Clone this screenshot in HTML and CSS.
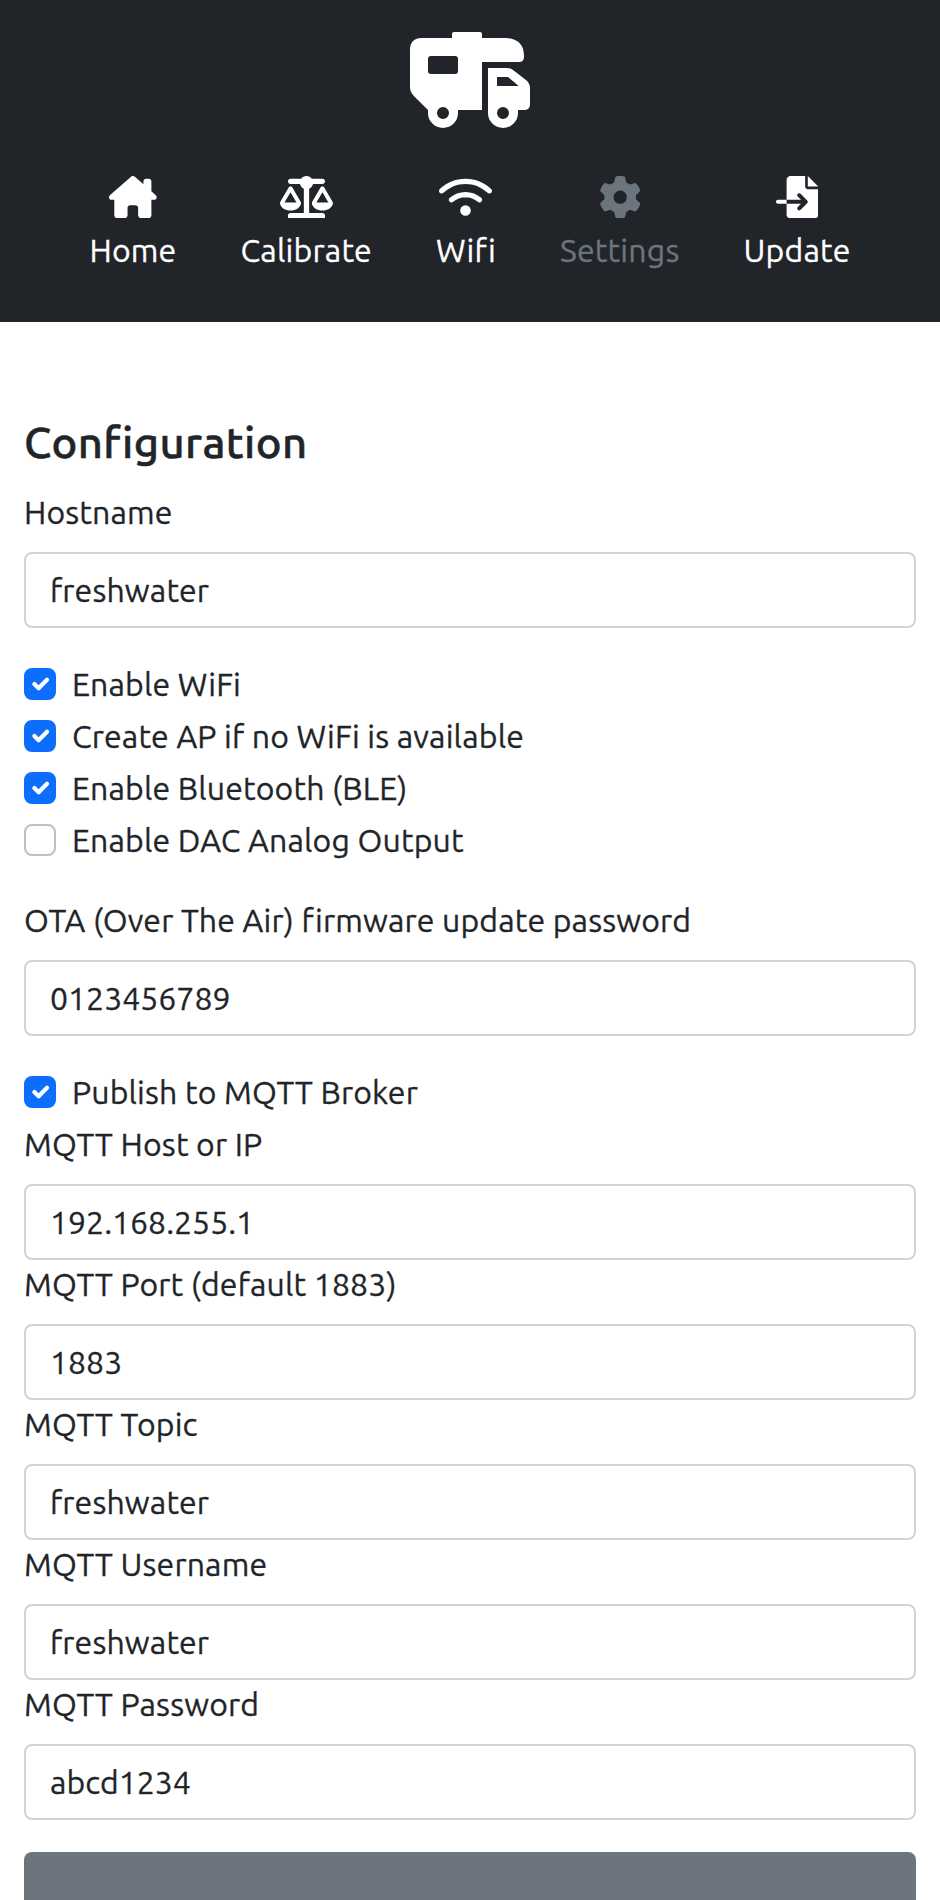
FILE: index.html
```html
<!DOCTYPE html>
<html lang="en">
<head>
<meta charset="utf-8">
<title>Settings</title>
<link rel="stylesheet" href="styles.css">
</head>
<body>
<header class="header">
  <svg class="logo" viewBox="60 36 360 288" fill="currentColor" fill-rule="evenodd"><path d="M96 54H186V42Q186 36 192 36H270Q276 36 276 42V54H348Q402 56 402 108V111Q402 126 387 126H276V270H204V279A45 45 0 0 1 114 279V270L71 227Q60 216 60 202V90Q60 54 96 54ZM123 108Q114 108 114 117V153Q114 162 123 162H195Q204 162 204 153V117Q204 108 195 108ZM159 261A18 18 0 1 0 159 297A18 18 0 1 0 159 261Z"/><path d="M294 144H350Q362 144 372 152L408 180Q420 190 420 204V252Q420 270 402 270H384V279A45 45 0 0 1 294 279ZM321 171V198H386L354 171ZM339 261A18 18 0 1 0 339 297A18 18 0 1 0 339 261Z"/></svg>
  <nav class="nav">
    <a class="item"><svg viewBox="0 0 576 512"><path d="M575.8 255.5c0 18-15 32.1-32 32.1h-32l.7 160.2V472c0 22.1-17.9 40-40 40H392c-22.1 0-40-17.9-40-40V384c0-17.7-14.3-32-32-32H256c-17.7 0-32 14.3-32 32v88c0 22.1-17.9 40-40 40H104c-22.1 0-40-17.9-40-40V287.6H32c-18 0-32-14-32-32.1c0-9 3-17 10-24L266.4 8c7-7 15-8 22-8s15 2 21 7L416 100.7V64c0-17.7 14.3-32 32-32h32c17.7 0 32 14.3 32 32v121l52.8 46.5c8 7 12 15 11 24z"/></svg><span>Home</span></a>
    <a class="item"><svg viewBox="0 0 640 512"><path d="M384 32H512c17.7 0 32 14.3 32 32s-14.3 32-32 32H398.4c-5.2 25.8-22.9 47.1-46.4 57.3V448H512c17.7 0 32 14.3 32 32v32H96v-32c0-17.7 14.3-32 32-32H288V153.3c-23.5-10.3-41.2-31.6-46.4-57.3H128c-17.7 0-32-14.3-32-32s14.3-32 32-32H256c14.6-19.4 37.8-32 64-32s49.4 12.6 64 32zm55.6 288H584.4L512 195.8 439.6 320zM512 416c-62.9 0-115.2-34-126-78.9c-2.6-11 1-22.3 6.7-32.1l95.2-163.2c5-8.6 14.2-13.8 24.1-13.8s19.1 5.3 24.1 13.8l95.2 163.2c5.7 9.8 9.3 21.1 6.7 32.1C627.2 382 574.9 416 512 416zM126.8 195.8L54.4 320H199.3L126.8 195.8zM.9 337.1c-2.6-11 1-22.3 6.7-32.1l95.2-163.2c5-8.6 14.2-13.8 24.1-13.8s19.1 5.3 24.1 13.8l95.2 163.2c5.7 9.8 9.3 21.1 6.7 32.1C242 382 189.7 416 126.8 416S11.7 382 .9 337.1z"/></svg><span>Calibrate</span></a>
    <a class="item"><svg viewBox="0 0 640 512"><path d="M54.2 202.9C123.2 136.7 216.8 96 320 96s196.8 40.7 265.8 106.9c12.8 12.2 33 11.8 45.2-.9s11.8-33-.9-45.2C549.7 79.5 440.4 32 320 32S90.3 79.5 9.8 156.7C-2.9 169-3.3 189.2 8.9 202s32.5 13.2 45.2 .9zM320 256c56.8 0 108.6 21.1 148.2 56c13.3 11.7 33.5 10.4 45.2-2.8s10.4-33.5-2.8-45.2C459.8 219.2 393 192 320 192s-139.8 27.2-190.5 72c-13.3 11.7-14.5 31.9-2.8 45.2s31.9 14.5 45.2 2.8c39.5-34.9 91.3-56 148.2-56zm64 160a64 64 0 1 0 -128 0 64 64 0 1 0 128 0z"/></svg><span>Wifi</span></a>
    <a class="item active"><svg viewBox="0 0 512 512"><path d="M495.9 166.6c3.2 8.7 .5 18.4-6.4 24.6l-43.3 39.4c1.1 8.3 1.7 16.8 1.7 25.4s-.6 17.1-1.7 25.4l43.3 39.4c6.9 6.2 9.6 15.9 6.4 24.6c-4.4 11.9-9.7 23.3-15.8 34.3l-4.7 8.1c-6.6 11-14 21.4-22.1 31.2c-5.9 7.2-15.7 9.6-24.5 6.8l-55.7-17.7c-13.4 10.3-28.2 18.9-44 25.4l-12.5 57.1c-2 9.1-9 16.3-18.2 17.8c-13.8 2.3-28 3.5-42.5 3.5s-28.7-1.2-42.5-3.5c-9.2-1.5-16.2-8.7-18.2-17.8l-12.5-57.1c-15.8-6.5-30.6-15.1-44-25.4L83.1 425.9c-8.8 2.8-18.6 .3-24.5-6.8c-8.1-9.8-15.5-20.2-22.1-31.2l-4.7-8.1c-6.1-11-11.4-22.4-15.8-34.3c-3.2-8.7-.5-18.4 6.4-24.6l43.3-39.4C64.6 273.1 64 264.6 64 256s.6-17.1 1.7-25.4L22.4 191.2c-6.9-6.2-9.6-15.9-6.4-24.6c4.4-11.9 9.7-23.3 15.8-34.3l4.7-8.1c6.6-11 14-21.4 22.1-31.2c5.9-7.2 15.7-9.6 24.5-6.8l55.7 17.7c13.4-10.3 28.2-18.9 44-25.4l12.5-57.1c2-9.1 9-16.3 18.2-17.8C227.3 1.2 241.5 0 256 0s28.7 1.2 42.5 3.5c9.2 1.5 16.2 8.7 18.2 17.8l12.5 57.1c15.8 6.5 30.6 15.1 44 25.4l55.7-17.7c8.8-2.8 18.6-.3 24.5 6.8c8.1 9.8 15.5 20.2 22.1 31.2l4.7 8.1c6.1 11 11.4 22.4 15.8 34.3zM256 336a80 80 0 1 0 0-160 80 80 0 1 0 0 160z"/></svg><span>Settings</span></a>
    <a class="item"><svg viewBox="0 0 512 512"><path d="M384 0v128h128L384 0zM352 128L352 0H176C149.5 0 128 21.5 128 48V288h174.1l-39.03-39.03c-9.375-9.375-9.375-24.56 0-33.94s24.56-9.375 33.94 0l80 80c9.375 9.375 9.375 24.56 0 33.94l-80 80c-9.375 9.375-24.56 9.375-33.94 0C258.3 404.3 256 398.2 256 392s2.344-12.28 7.031-16.97L302.1 336H128v128C128 490.5 149.5 512 176 512h288c26.51 0 48-21.49 48-48V160h-127.1C366.3 160 352 145.7 352 128zM24 288C10.75 288 0 298.7 0 312c0 13.25 10.75 24 24 24H128V288H24z"/></svg><span>Update</span></a>
  </nav>
</header>
<main class="main">
  <h4 class="title">Configuration</h4>
  <label class="label">Hostname</label>
  <input class="input" value="freshwater">
  <div class="checks">
    <label class="check"><span class="box on"><svg viewBox="0 0 20 20"><path d="m6 10 3 3 6-6"/></svg></span><span>Enable WiFi</span></label>
    <label class="check"><span class="box on"><svg viewBox="0 0 20 20"><path d="m6 10 3 3 6-6"/></svg></span><span>Create AP if no WiFi is available</span></label>
    <label class="check"><span class="box on"><svg viewBox="0 0 20 20"><path d="m6 10 3 3 6-6"/></svg></span><span>Enable Bluetooth (BLE)</span></label>
    <label class="check"><span class="box"></span><span>Enable DAC Analog Output</span></label>
  </div>
  <label class="label">OTA (Over The Air) firmware update password</label>
  <input class="input numeric" value="0123456789">
  <div class="checks publish">
    <label class="check"><span class="box on"><svg viewBox="0 0 20 20"><path d="m6 10 3 3 6-6"/></svg></span><span>Publish to MQTT Broker</span></label>
  </div>
  <label class="label">MQTT Host or IP</label>
  <input class="input numeric" value="192.168.255.1">
  <label class="label">MQTT Port (default 1883)</label>
  <input class="input numeric" value="1883">
  <label class="label">MQTT Topic</label>
  <input class="input" value="freshwater">
  <label class="label">MQTT Username</label>
  <input class="input" value="freshwater">
  <label class="label">MQTT Password</label>
  <input class="input numeric" value="abcd1234">
  <button class="save" aria-label="Save"></button>
</main>
</body>
</html>
```
FILE: styles.css
```css
* { box-sizing: border-box; }
html { overflow: hidden; }
body {
  margin: 0;
  height: 1900px;
  overflow: hidden;
  background: #fff;
  color: #212529;
  font: 32px/48px Ubuntu, "Noto Sans", sans-serif;
  letter-spacing: 0.15px;
  font-variant-ligatures: none;
  -webkit-text-stroke: 0.3px currentColor;
}
.header {
  height: 322px;
  padding-top: 32px;
  background: #212529;
  color: #fff;
}
.logo { display: block; width: 120px; height: 96px; margin: 0 auto 48px; }
.nav { display: flex; justify-content: center; gap: 64px; letter-spacing: 0.2px; }
.item { display: flex; flex-direction: column; align-items: center; white-space: nowrap; }
.item svg { height: 42.4px; margin-bottom: 7.6px; fill: currentColor; }
.active { color: #6c757d; }
.main { padding: 94px 24px 0; }
.title {
  margin: 0 0 20px;
  font-size: 43.64px;
  line-height: 52px;
  font-weight: 500;
  letter-spacing: 0.4px;
  -webkit-text-stroke-width: 0.5px;
}
.label { display: block; margin-bottom: 16px; white-space: nowrap; }
.input {
  display: block;
  width: 100%;
  height: 76px;
  padding: 0 24px;
  border: 2px solid #ced4da;
  border-radius: 8px;
  background: #fff;
  color: #212529;
  font: inherit;
  letter-spacing: inherit;
}
.numeric { letter-spacing: 0; }
.checks { margin: 32px 0; display: grid; gap: 4px; }
.publish { margin-bottom: 4px; }
.check { display: flex; gap: 16px; height: 48px; white-space: nowrap; }
.box {
  width: 32px;
  height: 32px;
  margin-top: 8px;
  border: 2px solid #bfbfbf;
  border-radius: 8px;
}
.on { background: #0d6efd; border-color: #0d6efd; }
.box svg {
  display: block;
  fill: none;
  stroke: #fff;
  stroke-width: 3;
  stroke-linecap: round;
  stroke-linejoin: round;
}
.save {
  display: block;
  width: 100%;
  height: 76px;
  margin-top: 32px;
  border: 0;
  border-radius: 8px;
  background: #6c757d;
}
```
